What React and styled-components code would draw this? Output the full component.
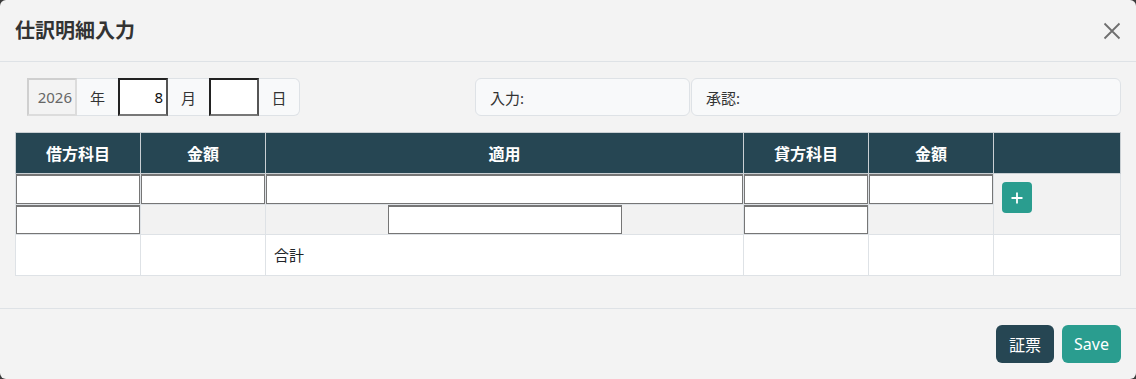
import React from 'react';
import styled, { createGlobalStyle } from 'styled-components';

const Global = createGlobalStyle`
   * { box-sizing: border-box; }
   html, body { margin: 0; padding: 0; background: #3a3a3a; }
   body {
      font-family: "Noto Sans", "Noto Sans CJK JP", sans-serif;
      font-size: 16px;
      color: #212529;
   }
   input::-webkit-outer-spin-button,
   input::-webkit-inner-spin-button { -webkit-appearance: none; margin: 0; }
`;

const Modal = styled.div`
   width: 1136px;
   height: 379px;
   background: #f3f3f3;
   border-radius: 6px;
   display: flex;
   flex-direction: column;
   overflow: hidden;
`;
const Header = styled.div`
   display: flex;
   align-items: center;
   justify-content: space-between;
   height: 62px;
   padding: 0 15px;
   border-bottom: 1px solid #dee2e6;
`;
const Title = styled.h5`
   margin: 0;
   font-size: 20px;
   font-weight: 700;
   line-height: 30px;
   color: #333;
`;
const CloseButton = styled.button`
   border: 0;
   background: transparent;
   padding: 0;
   width: 18px;
   height: 18px;
   display: flex;
   align-items: center;
   justify-content: center;
   cursor: pointer;
`;
const Body = styled.div`
   flex: 1;
   padding: 16px 15px 0;
   display: flex;
   flex-direction: column;
   gap: 16px;
`;
const TopRow = styled.div`
   display: grid;
   grid-template-columns: 460px 1fr;
   height: 38px;
`;
const DateGroup = styled.div`
   display: flex;
   padding-left: 12px;
`;
const DateInput = styled.input`
   width: 50px;
   height: 38px;
   font: inherit;
   font-size: 15px;
   text-align: right;
   padding: 0 3px;
   outline: none;
   background: ${p => (p.disabled ? '#f3f3f3' : '#fff')};
   color: ${p => (p.disabled ? '#666' : '#111')};
   border: 2px solid;
   border-color: ${p => (p.disabled ? '#cfcfcf #dcdcdc #dcdcdc #cfcfcf' : '#222 #555 #777 #222')};
`;
const Addon = styled.span`
   width: 41px;
   height: 38px;
   display: flex;
   align-items: center;
   justify-content: center;
   font-size: 15px;
   background: #f8f9fa;
   border: 1px solid #dee2e6;
   border-left: 0;
   border-right: ${p => (p.last ? '1px solid #dee2e6' : '0')};
   border-radius: ${p => (p.last ? '0 6px 6px 0' : '0')};
   color: #333;
`;
const Stamps = styled.div`
   display: grid;
   grid-template-columns: 215px 1fr;
   gap: 1px;
`;
const Stamp = styled.div`
   display: flex;
   align-items: center;
   padding: 0 14px;
   font-size: 15px;
   color: #333;
   background: #f8f9fa;
   border: 1px solid #dee2e6;
   border-radius: 6px;
`;
const Table = styled.table`
   width: 1105px;
   border-collapse: collapse;
   table-layout: fixed;
   border: 1px solid #dee2e6;
`;
const Th = styled.th`
   height: 41px;
   padding: 0 8px;
   background: #264653;
   color: #fff;
   font-size: 16px;
   font-weight: 700;
   text-align: center;
   border: 1px solid #c9cfd3;
`;
const Td = styled.td`
   padding: ${p => (p.pad ? '8px' : '0')};
   height: ${p => p.h || 'auto'};
   background: ${p => (p.white ? '#fff' : '#f2f2f2')};
   border: 1px solid #dee2e6;
   vertical-align: ${p => (p.top ? 'top' : 'middle')};
   text-align: ${p => (p.center ? 'center' : 'left')};
   font-size: 15px;
   line-height: 24px;
`;
const CellInput = styled.input`
   display: block;
   width: ${p => p.w || '100%'};
   margin: 0 auto;
   height: ${p => p.h || '30px'};
   font: inherit;
   background: #fff;
   border: 1px solid #767676;
   border-top-width: 2px;
   outline: none;
`;
const AddButton = styled.button`
   width: 30px;
   height: 31px;
   border: 0;
   border-radius: 4px;
   background: #2a9d8f;
   display: flex;
   align-items: center;
   justify-content: center;
   padding: 0;
   cursor: pointer;
`;
const Footer = styled.div`
   display: flex;
   justify-content: flex-end;
   gap: 8px;
   padding: 16px 15px;
   border-top: 1px solid #dee2e6;
`;
const Button = styled.button`
   height: 38px;
   min-width: 58px;
   padding: 0 12px;
   border: 0;
   border-radius: 6px;
   font: inherit;
   font-size: 16px;
   color: #fff;
   background: ${p => p.bg};
   cursor: pointer;
`;

const cols = ['125px', '125px', '478px', '125px', '125px', '127px'];

export default function App() {
   return (
      <>
         <Global />
         <Modal>
            <Header>
               <Title>仕訳明細入力</Title>
               <CloseButton aria-label="close">
                  <svg width="18" height="18" viewBox="0 0 18 18">
                     <path d="M1.5 1.5 L16.5 16.5 M16.5 1.5 L1.5 16.5" stroke="#6f6f6f" strokeWidth="1.8" />
                  </svg>
               </CloseButton>
            </Header>
            <Body>
               <TopRow>
                  <DateGroup>
                     <DateInput disabled defaultValue="2026" />
                     <Addon>年</Addon>
                     <DateInput type="number" defaultValue="8" />
                     <Addon>月</Addon>
                     <DateInput type="number" />
                     <Addon last>日</Addon>
                  </DateGroup>
                  <Stamps>
                     <Stamp>入力:</Stamp>
                     <Stamp>承認:</Stamp>
                  </Stamps>
               </TopRow>
               <Table>
                  <colgroup>
                     {cols.map((w, i) => <col key={i} style={{ width: w }} />)}
                  </colgroup>
                  <thead>
                     <tr>
                        <Th>借方科目</Th>
                        <Th>金額</Th>
                        <Th>適用</Th>
                        <Th>貸方科目</Th>
                        <Th>金額</Th>
                        <Th></Th>
                     </tr>
                  </thead>
                  <tbody>
                     <tr>
                        <Td><CellInput /></Td>
                        <Td><CellInput /></Td>
                        <Td><CellInput /></Td>
                        <Td><CellInput /></Td>
                        <Td><CellInput /></Td>
                        <Td rowSpan={2} pad top>
                           <AddButton aria-label="add">
                              <svg width="12" height="12" viewBox="0 0 12 12">
                                 <path d="M6 0.5 V11.5 M0.5 6 H11.5" stroke="#fff" strokeWidth="1.8" />
                              </svg>
                           </AddButton>
                        </Td>
                     </tr>
                     <tr>
                        <Td><CellInput h="29px" /></Td>
                        <Td></Td>
                        <Td center><CellInput w="234px" h="29px" /></Td>
                        <Td><CellInput h="29px" /></Td>
                        <Td></Td>
                     </tr>
                     <tr>
                        <Td white pad h="41px"></Td>
                        <Td white pad></Td>
                        <Td white pad>合計</Td>
                        <Td white pad></Td>
                        <Td white pad></Td>
                        <Td white pad></Td>
                     </tr>
                  </tbody>
               </Table>
            </Body>
            <Footer>
               <Button bg="#264653">証票</Button>
               <Button bg="#2a9d8f">Save</Button>
            </Footer>
         </Modal>
      </>
   );
}
